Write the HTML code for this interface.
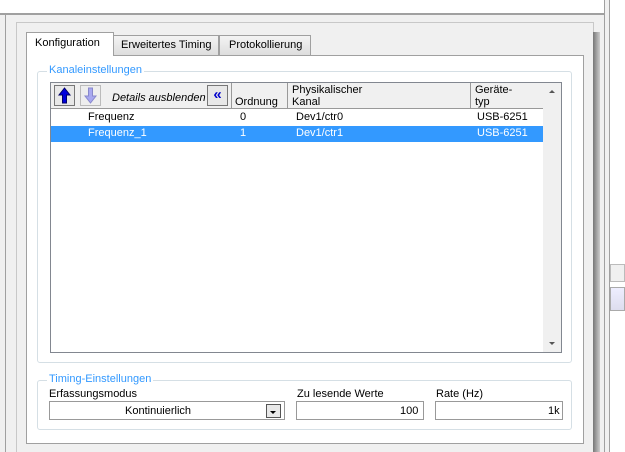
<!DOCTYPE html><html><head><style>
*{margin:0;padding:0;box-sizing:border-box}
body{width:625px;height:452px;background:#f0f0f0;position:relative;overflow:hidden;font-family:"Liberation Sans",sans-serif;font-size:11px;color:#000}
.a{position:absolute}
.t{white-space:nowrap}
</style></head><body>
<div class="a" style="left:0;top:0;width:604px;height:13px;background:#fff"></div>
<div class="a" style="left:0;top:13px;width:604px;height:2px;background:#a0a0a0"></div>
<div class="a" style="left:5px;top:15px;width:1px;height:437px;background:#a0a0a0"></div>
<div class="a" style="left:604px;top:0;width:1px;height:452px;background:#a0a0a0"></div>
<div class="a" style="left:609px;top:0;width:16px;height:452px;background:#fff;border-left:1px solid #a0a0a0"></div>
<div class="a" style="left:610px;top:264px;width:15px;height:18px;background:#f0f0f0;border:1px solid #bbb"></div>
<div class="a" style="left:610px;top:287px;width:15px;height:24px;background:linear-gradient(#eef 0,#dde 100%);border:1px solid #aaa"></div>
<div class="a" style="left:16px;top:22px;width:578px;height:430px;background:#f0f0f0;border:1px solid #c8c8c8;border-bottom:none"></div>
<div class="a" style="left:593px;top:32px;width:7px;height:420px;background:linear-gradient(90deg,#777,#ccc)"></div>
<div class="a" style="left:26px;top:55px;width:558px;height:389px;background:#fff;border:1px solid #a0a0a0"></div>
<div class="a" style="left:113px;top:35px;width:106px;height:21px;background:linear-gradient(#f4f4f4,#ddd);border:1px solid #a0a0a0"></div>
<div class="a t" style="left:121px;top:39px">Erweitertes Timing</div>
<div class="a" style="left:219px;top:35px;width:92px;height:21px;background:linear-gradient(#f4f4f4,#ddd);border:1px solid #a0a0a0"></div>
<div class="a t" style="left:229px;top:39px">Protokollierung</div>
<div class="a" style="left:26px;top:32px;width:88px;height:24px;background:#fff;border:1px solid #a0a0a0;border-bottom:none"></div>
<div class="a t" style="left:35px;top:37px">Konfiguration</div>
<div class="a" style="left:37px;top:71px;width:535px;height:292px;border:1px solid #d5dfe5;border-radius:3px"></div>
<div class="a t" style="left:47px;top:64px;background:#fff;padding:0 2px;color:#3399ff">Kanaleinstellungen</div>
<div class="a" style="left:50px;top:82px;width:512px;height:271px;background:#fff;border:1px solid #828790"></div>
<div class="a" style="left:51px;top:83px;width:492px;height:25px;background:#f0f0f0"></div>
<div class="a" style="left:231px;top:83px;width:1px;height:25px;background:#999"></div>
<div class="a" style="left:287px;top:83px;width:1px;height:25px;background:#999"></div>
<div class="a" style="left:470px;top:83px;width:1px;height:25px;background:#999"></div>
<div class="a" style="left:51px;top:108px;width:492px;height:1px;background:#999"></div>
<div class="a" style="left:54px;top:85px;width:21px;height:21px;border:1px solid #777;background:#e8e8e8">
<svg width="19" height="19" style="position:absolute;left:0;top:0"><path d="M9.5 2 L4 9 L7.5 9 L7.5 17 L11.5 17 L11.5 9 L15 9 Z" fill="#0000dd" stroke="#000066" stroke-width="1"/></svg></div>
<div class="a" style="left:80px;top:85px;width:21px;height:21px;border:1px solid #bbb;background:#eee">
<svg width="19" height="19" style="position:absolute;left:0;top:0"><path d="M9.5 17 L4 10 L7.5 10 L7.5 2 L11.5 2 L11.5 10 L15 10 Z" fill="#a8a8f0" stroke="#8888cc" stroke-width="1"/></svg></div>
<div class="a t" style="left:112px;top:92px;font-style:italic">Details ausblenden</div>
<div class="a" style="left:207px;top:85px;width:21px;height:21px;border:1px solid #777;background:#e8e8e8;color:#0000cc;font-size:15px;font-weight:bold;text-align:center;line-height:18px">&laquo;</div>
<div class="a t" style="left:235px;top:96px">Ordnung</div>
<div class="a t" style="left:292px;top:84px;line-height:12px">Physikalischer<br>Kanal</div>
<div class="a t" style="left:475px;top:84px;line-height:12px">Geräte-<br>typ</div>
<div class="a t" style="left:88px;top:111px">Frequenz</div>
<div class="a t" style="left:240px;top:111px">0</div>
<div class="a t" style="left:296px;top:111px">Dev1/ctr0</div>
<div class="a t" style="left:477px;top:111px">USB-6251</div>
<div class="a" style="left:51px;top:126px;width:492px;height:16px;background:#3399ff"></div>
<div class="a t" style="left:88px;top:127px;color:#fff">Frequenz_1</div>
<div class="a t" style="left:240px;top:127px;color:#fff">1</div>
<div class="a t" style="left:296px;top:127px;color:#fff">Dev1/ctr1</div>
<div class="a t" style="left:477px;top:127px;color:#fff">USB-6251</div>
<div class="a" style="left:543px;top:83px;width:18px;height:269px;background:#f0f0f0"></div>
<div class="a" style="left:549px;top:90px;border:3px solid transparent;border-bottom:3px solid #555;border-top:none"></div>
<div class="a" style="left:549px;top:342px;border:3px solid transparent;border-top:3px solid #555;border-bottom:none"></div>
<div class="a" style="left:37px;top:380px;width:535px;height:50px;border:1px solid #d5dfe5;border-radius:3px"></div>
<div class="a t" style="left:47px;top:373px;background:#fff;padding:0 2px;color:#3399ff">Timing-Einstellungen</div>
<div class="a t" style="left:49px;top:388px">Erfassungsmodus</div>
<div class="a t" style="left:297px;top:388px">Zu lesende Werte</div>
<div class="a t" style="left:436px;top:388px">Rate (Hz)</div>
<div class="a" style="left:49px;top:401px;width:236px;height:19px;border:1px solid #999;background:#fff"></div>
<div class="a t" style="left:125px;top:405px">Kontinuierlich</div>
<div class="a" style="left:266px;top:404px;width:15px;height:14px;border:1px solid #555;background:#e8e8e8"></div>
<div class="a" style="left:270px;top:411px;border:3px solid transparent;border-top:3px solid #000;border-bottom:none"></div>
<div class="a" style="left:296px;top:401px;width:128px;height:19px;border:1px solid #999;background:#fff"></div>
<div class="a t" style="left:400px;top:405px">100</div>
<div class="a" style="left:435px;top:401px;width:128px;height:19px;border:1px solid #999;background:#fff"></div>
<div class="a t" style="left:548px;top:405px">1k</div>
</body></html>
